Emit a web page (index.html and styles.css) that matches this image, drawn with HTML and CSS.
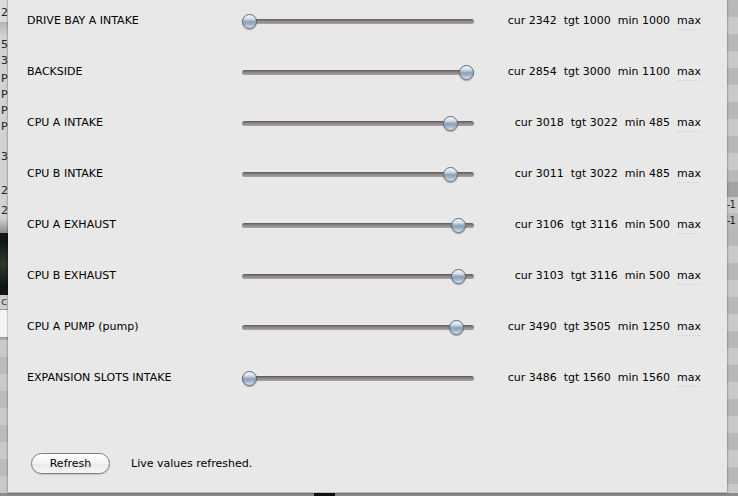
FILE: index.html
```html
<!DOCTYPE html>
<html>
<head>
  <link rel="stylesheet" href="styles.css">
</head>
<body>
  <div class="behind behind-left">
    <div class="bl-line bl-top">2</div>
    <div class="bl-band"></div>
    <div class="bl-line bl-gap">5</div>
    <div class="bl-line">3</div>
    <div class="bl-line bl-gap">P</div>
    <div class="bl-line">P</div>
    <div class="bl-line">P</div>
    <div class="bl-line">P</div>
    <div class="bl-line bl-big">3</div>
    <div class="bl-line bl-big">2</div>
    <div class="bl-line">2</div>
    <div class="bl-shade"></div>
    <div class="bl-photo"></div>
    <div class="bl-line bl-label">c</div>
    <div class="bl-field"></div>
    <div class="bl-rows"></div>
  </div>

  <div class="sheet">
    <div class="fans">
      <div class="fan">
        <span class="fan-name">DRIVE BAY A INTAKE</span>
        <div class="slider"><div class="knob" style="--pos: 0"></div></div>
        <span class="fan-values">cur 2342  tgt 1000  min 1000  <span class="max">max</span></span>
      </div>
      <div class="fan">
        <span class="fan-name">BACKSIDE</span>
        <div class="slider"><div class="knob" style="--pos: 1"></div></div>
        <span class="fan-values">cur 2854  tgt 3000  min 1100  <span class="max">max</span></span>
      </div>
      <div class="fan">
        <span class="fan-name">CPU A INTAKE</span>
        <div class="slider"><div class="knob" style="--pos: 0.925"></div></div>
        <span class="fan-values">cur 3018  tgt 3022  min 485  <span class="max">max</span></span>
      </div>
      <div class="fan">
        <span class="fan-name">CPU B INTAKE</span>
        <div class="slider"><div class="knob" style="--pos: 0.925"></div></div>
        <span class="fan-values">cur 3011  tgt 3022  min 485  <span class="max">max</span></span>
      </div>
      <div class="fan">
        <span class="fan-name">CPU A EXHAUST</span>
        <div class="slider"><div class="knob" style="--pos: 0.962"></div></div>
        <span class="fan-values">cur 3106  tgt 3116  min 500  <span class="max">max</span></span>
      </div>
      <div class="fan">
        <span class="fan-name">CPU B EXHAUST</span>
        <div class="slider"><div class="knob" style="--pos: 0.962"></div></div>
        <span class="fan-values">cur 3103  tgt 3116  min 500  <span class="max">max</span></span>
      </div>
      <div class="fan">
        <span class="fan-name">CPU A PUMP (pump)</span>
        <div class="slider"><div class="knob" style="--pos: 0.955"></div></div>
        <span class="fan-values">cur 3490  tgt 3505  min 1250  <span class="max">max</span></span>
      </div>
      <div class="fan">
        <span class="fan-name">EXPANSION SLOTS INTAKE</span>
        <div class="slider"><div class="knob" style="--pos: 0"></div></div>
        <span class="fan-values">cur 3486  tgt 1560  min 1560  <span class="max">max</span></span>
      </div>
    </div>

    <div class="footer">
      <button class="btn">Refresh</button>
      <span class="status">Live values refreshed.</span>
    </div>
  </div>

  <div class="behind behind-right">
    <div class="br-stripes"></div>
    <div class="br-header"></div>
    <div class="br-line">-1</div>
    <div class="br-line">-1</div>
    <div class="br-stripes br-rest"></div>
  </div>

  <div class="dock">
    <div class="dock-item"></div>
  </div>
</body>
</html>
```

FILE: styles.css
```css
body {
  margin: 0;
  width: 738px;
  height: 496px;
  overflow: hidden;
  display: grid;
  grid-template-columns: 8px 719px 11px;
  grid-template-rows: 493px 3px;
  font-family: "DejaVu Sans", sans-serif;
  font-size: 11px;
  color: #000;
  background-color: #8f8f8f;
}

/* window peeking out on the left */
.behind {
  overflow: hidden;
  display: flex;
  flex-direction: column;
}

.behind-left {
  background-color: #d2d2d2;
}

.bl-line {
  height: 16px;
  line-height: 16px;
  padding-left: 1px;
  white-space: nowrap;
  color: #222;
  font-size: 11px;
}

.bl-top {
  height: 22px;
  line-height: 26px;
  background-color: #dcdcdc;
}

.bl-band {
  height: 13px;
  background: linear-gradient(#b4b4b4, #cfcfcf);
}

.bl-gap {
  margin-top: 2px;
}

.bl-big {
  margin-top: 14px;
  height: 20px;
}

.bl-shade {
  height: 14px;
  background: linear-gradient(#cfcfcf, #8a8a8a);
}

.bl-photo {
  height: 62px;
  background: radial-gradient(circle at 40% 50%, #2f3a2a, #121612 70%);
}

.bl-label {
  height: 14px;
  line-height: 14px;
  color: #444;
  background-color: #cfcfcf;
}

.bl-field {
  height: 27px;
  background-color: #f4f4f4;
  border-top: 1px solid #9a9a9a;
  border-bottom: 1px solid #9a9a9a;
}

.bl-rows {
  flex: 1;
  background: repeating-linear-gradient(#c9c9c9 0 17px, #bcbcbc 17px 34px);
  border-top: 2px solid #aaaaaa;
}

/* the sheet itself */
.sheet {
  position: relative;
  z-index: 1;
  background-color: #e8e8e8;
  box-shadow: 0 0 2px rgba(0, 0, 0, 0.55);
  border-bottom: 1px solid #bdbdbd;
  display: flex;
  flex-direction: column;
  padding: 0 26px 0 19px;
}

.fans {
  display: flex;
  flex-direction: column;
  gap: 11px;
}

.fan {
  display: grid;
  grid-template-columns: 215px 232px 1fr;
  align-items: center;
  height: 40px;
}

.fan-name {
  white-space: nowrap;
}

.fan-values {
  text-align: right;
  white-space: pre;
}

.max {
  text-decoration: underline dotted #d2d2d2;
  text-underline-offset: 5px;
}

.slider {
  position: relative;
  height: 15px;
  margin-top: 3px;
}

.slider::before {
  content: "";
  display: block;
  height: 5px;
  margin-top: 5px;
  border-radius: 3px;
  background: linear-gradient(#5c5656, #8c8686 45%, #a9a3a3);
}

.knob {
  position: absolute;
  top: 0;
  left: calc((100% - 15px) * var(--pos));
  width: 13px;
  height: 13px;
  border-radius: 50%;
  border: 1px solid #5b6b7d;
  background: linear-gradient(#f5f8fb 0%, #d3dde7 30%, #8da2b7 52%, #9fb3c6 72%, #dbe5ee 100%);
  box-shadow: 0 1px 1px rgba(0, 0, 0, 0.3);
}

.footer {
  margin-top: auto;
  padding: 0 0 18px 4px;
  display: flex;
  align-items: center;
  gap: 21px;
}

.btn {
  width: 79px;
  height: 21px;
  padding: 0;
  font-family: "DejaVu Sans", sans-serif;
  font-size: 11px;
  color: #000;
  border: 1px solid #7e7e7e;
  border-radius: 11px;
  background: linear-gradient(#ffffff 0%, #f3f3f3 50%, #e9e9e9 55%, #f7f7f7 100%);
  box-shadow: 0 1px 1px rgba(0, 0, 0, 0.15);
}

/* list window on the right */
.behind-right {
  background-color: #c4c4c4;
}

.br-stripes {
  height: 182px;
  background: repeating-linear-gradient(#b8b8b8 0 17px, #c9c9c9 17px 34px);
}

.br-header {
  height: 15px;
  background-color: #a3a3a3;
}

.br-line {
  height: 16px;
  line-height: 16px;
  white-space: nowrap;
  font-size: 10px;
  letter-spacing: -1px;
  color: #222;
  background-color: #cbcbcb;
}

.br-line + .br-line {
  background-color: #bcbcbc;
}

.br-rest {
  flex: 1;
  height: auto;
}

.dock {
  grid-column: 1 / -1;
  display: flex;
  padding-left: 314px;
  background-color: #8c8c8c;
}

.dock-item {
  width: 21px;
  background-color: #111;
}
```
